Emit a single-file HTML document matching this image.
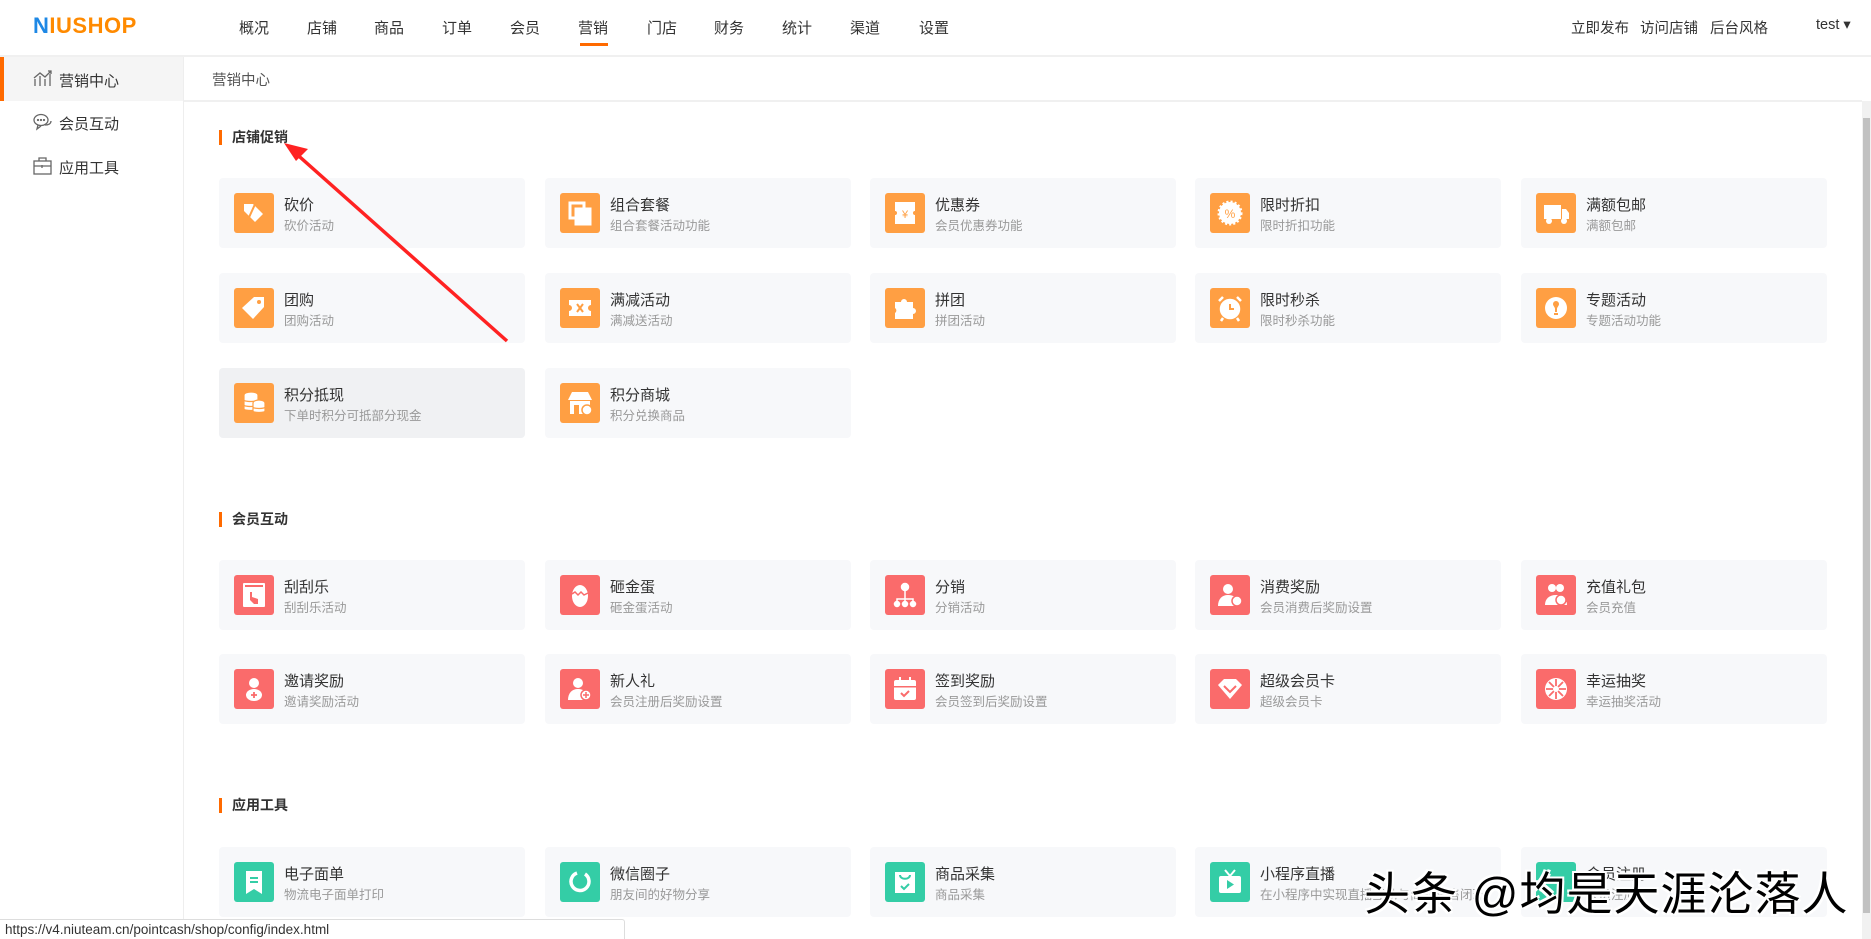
<!DOCTYPE html>
<html><head><meta charset="utf-8"><style>
*{margin:0;padding:0;box-sizing:border-box}
body{width:1871px;height:939px;overflow:hidden;background:#fff;font-family:"Liberation Sans","Noto Sans CJK SC",sans-serif;position:relative;color:#333}
.a{position:absolute;white-space:nowrap}
.hdr{position:absolute;left:0;top:0;width:1871px;height:57px;border-bottom:2px solid #f0f0f0;background:#fff}
.nav{font-size:15px;color:#333;top:17px}
.side{position:absolute;left:0;top:57px;width:184px;height:882px;border-right:1px solid #eee}
.card{position:absolute;width:306px;height:70px;background:#f7f8fa;border-radius:4px}
.card .ic{position:absolute;left:15px;top:15px;width:40px;height:40px;border-radius:3px}
.card .t{position:absolute;left:65px;top:16px;font-size:15px;color:#333;white-space:nowrap}
.card .s{position:absolute;left:65px;top:37px;font-size:12.5px;color:#999;white-space:nowrap}
.o{background:#ff9f43}.r{background:#fa6b6b}.g{background:#34cda6}
.sec{position:absolute;left:219px;font-size:14px;font-weight:bold;color:#333;padding-left:10px;border-left:3px solid #ff6a00;line-height:15px}
svg{display:block}
</style></head><body>
<div class="hdr"></div>
<div class="a" style="left:33px;top:13px;font-size:22px;font-weight:bold;color:#ff8a00;letter-spacing:0.5px"><span style="color:#1e88e5">N</span>IUSHOP</div>
<div class="a nav" style="left:239px">概况</div>
<div class="a nav" style="left:307px">店铺</div>
<div class="a nav" style="left:374px">商品</div>
<div class="a nav" style="left:442px">订单</div>
<div class="a nav" style="left:510px">会员</div>
<div class="a nav" style="left:578px">营销</div>
<div class="a" style="left:580px;top:43px;width:28px;height:3px;background:#ff6a00"></div>
<div class="a nav" style="left:647px">门店</div>
<div class="a nav" style="left:714px">财务</div>
<div class="a nav" style="left:782px">统计</div>
<div class="a nav" style="left:850px">渠道</div>
<div class="a nav" style="left:919px">设置</div>
<div class="a nav" style="left:1571px;font-size:14.5px">立即发布</div>
<div class="a nav" style="left:1640px;font-size:14.5px">访问店铺</div>
<div class="a nav" style="left:1710px;font-size:14.5px">后台风格</div>
<div class="a nav" style="left:1816px;font-size:14.5px">test ▾</div>

<div class="side">
 <div style="position:absolute;left:0;top:0;width:183px;height:44px;background:#f5f5f5;border-left:4px solid #ff6a00"></div>
</div>
<svg class="a" style="left:33px;top:70px" width="20" height="17" viewBox="0 0 20 17" fill="none" stroke="#666" stroke-width="1.3"><path d="M2 16V9M7 16V6M12 16V9M17 16V4M1 8l6-5 5 4 6-6M15 1h3v3"/></svg>
<div class="a" style="left:59px;top:70px;font-size:15px;color:#333">营销中心</div>
<svg class="a" style="left:33px;top:113px" width="19" height="18" viewBox="0 0 19 18" fill="none" stroke="#666" stroke-width="1.3"><ellipse cx="8" cy="7" rx="7" ry="5.5"/><path d="M5 12l-1 4 4-3M12 12c3 0 6-1 6-4"/><circle cx="5" cy="7" r=".5"/><circle cx="8" cy="7" r=".5"/><circle cx="11" cy="7" r=".5"/></svg>
<div class="a" style="left:59px;top:113px;font-size:15px;color:#333">会员互动</div>
<svg class="a" style="left:33px;top:157px" width="19" height="18" viewBox="0 0 19 18" fill="none" stroke="#666" stroke-width="1.3"><rect x="1" y="4" width="17" height="13"/><path d="M6 4V1h7v3M1 9h17M9 8v3"/></svg>
<div class="a" style="left:59px;top:157px;font-size:15px;color:#333">应用工具</div>

<div class="a" style="left:184px;top:57px;width:1678px;height:45px;border-bottom:2px solid #f0f0f0"></div>
<div class="a" style="left:212px;top:69px;font-size:14.5px;color:#555">营销中心</div>
<div class="a" style="left:1862px;top:101px;width:9px;height:838px;background:#f1f1f1"></div>
<div class="a" style="left:1863px;top:118px;width:7px;height:795px;background:#c1c1c1"></div>

<div class="sec" style="top:130px">店铺促销</div>
<div class="sec" style="top:512px">会员互动</div>
<div class="sec" style="top:798px">应用工具</div>

<div class="card" style="left:219px;top:178px"><div class="ic o"><svg width="40" height="40" viewBox="0 0 40 40" fill="#fff"><path d="M10 11h9l10 10-8 8-11-11z"/><path d="M22 9l-10 22" stroke="#ff9f43" stroke-width="2"/></svg></div><div class="t">砍价</div><div class="s">砍价活动</div></div>
<div class="card" style="left:545px;top:178px"><div class="ic o"><svg width="40" height="40" viewBox="0 0 40 40" fill="none" stroke="#fff" stroke-width="3"><rect x="10" y="10" width="14" height="15"/><rect x="16" y="16" width="14" height="15" fill="#fff"/></svg></div><div class="t">组合套餐</div><div class="s">组合套餐活动功能</div></div>
<div class="card" style="left:870px;top:178px"><div class="ic o"><svg width="40" height="40" viewBox="0 0 40 40"><path d="M10 9h20v9a2 2 0 000 4v9H10v-9a2 2 0 000-4z" fill="#fff"/><text x="20" y="25" font-size="11" fill="#ff9f43" text-anchor="middle" font-family="Liberation Sans">¥</text></svg></div><div class="t">优惠券</div><div class="s">会员优惠券功能</div></div>
<div class="card" style="left:1195px;top:178px"><div class="ic o"><svg width="40" height="40" viewBox="0 0 40 40"><circle cx="20" cy="20" r="11" fill="#fff" stroke="#fff" stroke-width="3" stroke-dasharray="2 2"/><text x="20" y="25" font-size="12" fill="#ff9f43" text-anchor="middle" font-family="Liberation Sans">%</text></svg></div><div class="t">限时折扣</div><div class="s">限时折扣功能</div></div>
<div class="card" style="left:1521px;top:178px"><div class="ic o"><svg width="40" height="40" viewBox="0 0 40 40" fill="#fff"><rect x="8" y="12" width="17" height="14"/><path d="M26 16h4l3 4v6h-7z"/><circle cx="13" cy="28" r="3"/><circle cx="28" cy="28" r="3"/></svg></div><div class="t">满额包邮</div><div class="s">满额包邮</div></div>
<div class="card" style="left:219px;top:273px"><div class="ic o"><svg width="40" height="40" viewBox="0 0 40 40" fill="#fff"><path d="M20 9h10v10L19 31 8 20z"/><circle cx="25" cy="14" r="2" fill="#ff9f43"/></svg></div><div class="t">团购</div><div class="s">团购活动</div></div>
<div class="card" style="left:545px;top:273px"><div class="ic o"><svg width="40" height="40" viewBox="0 0 40 40" fill="#fff"><path d="M9 12h22v5a3 3 0 000 6v5H9v-5a3 3 0 000-6z"/><path d="M17 16l6 8M23 16l-6 8" stroke="#ff9f43" stroke-width="2"/></svg></div><div class="t">满减活动</div><div class="s">满减送活动</div></div>
<div class="card" style="left:870px;top:273px"><div class="ic o"><svg width="40" height="40" viewBox="0 0 40 40" fill="#fff"><path d="M10 14h6a3 3 0 016 0h6v6a3 3 0 010 6v5H10v-6a3 3 0 000-5z"/></svg></div><div class="t">拼团</div><div class="s">拼团活动</div></div>
<div class="card" style="left:1195px;top:273px"><div class="ic o"><svg width="40" height="40" viewBox="0 0 40 40" fill="none" stroke="#fff" stroke-width="2.5"><circle cx="20" cy="21" r="9" fill="#fff"/><path d="M20 16v5h4" stroke="#ff9f43" stroke-width="2"/><path d="M9 13l4-4M31 13l-4-4M13 30l-2 3M27 30l2 3"/></svg></div><div class="t">限时秒杀</div><div class="s">限时秒杀功能</div></div>
<div class="card" style="left:1521px;top:273px"><div class="ic o"><svg width="40" height="40" viewBox="0 0 40 40"><circle cx="20" cy="20" r="11" fill="#fff"/><path d="M17 16a3 3 0 116 0c0 2-2 3-2 5v3h-2v-3c0-2-2-3-2-5z" fill="#ff9f43"/><rect x="18" y="25" width="4" height="2" fill="#ff9f43"/></svg></div><div class="t">专题活动</div><div class="s">专题活动功能</div></div>
<div class="card" style="left:219px;top:368px;background:#f0f1f3"><div class="ic o"><svg width="40" height="40" viewBox="0 0 40 40" fill="#fff" stroke="#ff9f43" stroke-width="1.2"><ellipse cx="17" cy="12" rx="7" ry="3"/><path d="M10 12v14c0 2 14 2 14 0V12"/><path d="M10 17c0 2 14 2 14 0M10 22c0 2 14 2 14 0"/><ellipse cx="25" cy="20" rx="6" ry="3"/><path d="M19 20v8c0 2 12 2 12 0v-8M19 24c0 2 12 2 12 0"/></svg></div><div class="t">积分抵现</div><div class="s">下单时积分可抵部分现金</div></div>
<div class="card" style="left:545px;top:368px"><div class="ic o"><svg width="40" height="40" viewBox="0 0 40 40" fill="#fff"><path d="M12 9h16l4 8H8z"/><path d="M10 18h20v13H10z"/><rect x="14" y="22" width="5" height="9" fill="#ff9f43"/><circle cx="27" cy="27" r="5" fill="#fff" stroke="#ff9f43" stroke-width="1.5"/></svg></div><div class="t">积分商城</div><div class="s">积分兑换商品</div></div>

<div class="card" style="left:219px;top:560px"><div class="ic r"><svg width="40" height="40" viewBox="0 0 40 40" fill="#fff"><rect x="9" y="8" width="22" height="24" rx="1"/><rect x="11" y="10" width="18" height="2" fill="#fa6b6b"/><path d="M16 17v8l4 4h4v-5l-6-2v-5z" fill="#fa6b6b"/></svg></div><div class="t">刮刮乐</div><div class="s">刮刮乐活动</div></div>
<div class="card" style="left:545px;top:560px"><div class="ic r"><svg width="40" height="40" viewBox="0 0 40 40" fill="#fff"><ellipse cx="20" cy="21" rx="8" ry="11"/><path d="M12 19l3-2 3 3 3-3 3 3 4-2" stroke="#fa6b6b" stroke-width="1.5" fill="none"/></svg></div><div class="t">砸金蛋</div><div class="s">砸金蛋活动</div></div>
<div class="card" style="left:870px;top:560px"><div class="ic r"><svg width="40" height="40" viewBox="0 0 40 40" fill="#fff" stroke="#fff" stroke-width="1.5"><circle cx="20" cy="12" r="3.5"/><path d="M20 15v9M12 28v-4h16v4M20 24v4" fill="none"/><circle cx="12" cy="29" r="2.5"/><circle cx="20" cy="29" r="2.5"/><circle cx="28" cy="29" r="2.5"/></svg></div><div class="t">分销</div><div class="s">分销活动</div></div>
<div class="card" style="left:1195px;top:560px"><div class="ic r"><svg width="40" height="40" viewBox="0 0 40 40" fill="#fff"><circle cx="18" cy="14" r="5"/><path d="M8 31c0-7 4-11 10-11s8 3 8 3v8z"/><circle cx="27" cy="26" r="5" stroke="#fa6b6b" stroke-width="1.5"/></svg></div><div class="t">消费奖励</div><div class="s">会员消费后奖励设置</div></div>
<div class="card" style="left:1521px;top:560px"><div class="ic r"><svg width="40" height="40" viewBox="0 0 40 40" fill="#fff"><circle cx="16" cy="13" r="4"/><circle cx="24" cy="13" r="4"/><path d="M9 30c0-6 4-10 11-10s11 4 11 10z"/><circle cx="25" cy="25" r="5" stroke="#fa6b6b" stroke-width="1.5"/></svg></div><div class="t">充值礼包</div><div class="s">会员充值</div></div>

<div class="card" style="left:219px;top:654px"><div class="ic r"><svg width="40" height="40" viewBox="0 0 40 40" fill="#fff"><circle cx="20" cy="14" r="5"/><ellipse cx="20" cy="26" rx="8" ry="6"/><path d="M20 23v6M17 26h6" stroke="#fa6b6b" stroke-width="1.8"/></svg></div><div class="t">邀请奖励</div><div class="s">邀请奖励活动</div></div>
<div class="card" style="left:545px;top:654px"><div class="ic r"><svg width="40" height="40" viewBox="0 0 40 40" fill="#fff"><circle cx="18" cy="14" r="5"/><path d="M8 31c0-7 4-11 10-11s9 4 9 4v7z"/><circle cx="26" cy="26" r="5" stroke="#fa6b6b" stroke-width="1.5"/><path d="M26 23v6M23 26h6" stroke="#fa6b6b" stroke-width="1.5"/></svg></div><div class="t">新人礼</div><div class="s">会员注册后奖励设置</div></div>
<div class="card" style="left:870px;top:654px"><div class="ic r"><svg width="40" height="40" viewBox="0 0 40 40" fill="#fff"><rect x="9" y="11" width="22" height="20" rx="2"/><rect x="9" y="17" width="22" height="1.5" fill="#fa6b6b"/><path d="M15 8v5M25 8v5" stroke="#fff" stroke-width="2"/><path d="M16 24l3 3 5-5" stroke="#fa6b6b" stroke-width="2" fill="none"/></svg></div><div class="t">签到奖励</div><div class="s">会员签到后奖励设置</div></div>
<div class="card" style="left:1195px;top:654px"><div class="ic r"><svg width="40" height="40" viewBox="0 0 40 40" fill="#fff"><path d="M8 16l6-6h12l6 6-12 14z"/><path d="M14 17l6 6 6-6" stroke="#fa6b6b" stroke-width="2" fill="none"/></svg></div><div class="t">超级会员卡</div><div class="s">超级会员卡</div></div>
<div class="card" style="left:1521px;top:654px"><div class="ic r"><svg width="40" height="40" viewBox="0 0 40 40" fill="#fff"><circle cx="20" cy="20" r="11"/><path d="M20 10v20M10 20h20M13 13l14 14M27 13L13 27" stroke="#fa6b6b" stroke-width="1.8"/><circle cx="20" cy="20" r="3"/></svg></div><div class="t">幸运抽奖</div><div class="s">幸运抽奖活动</div></div>

<div class="card" style="left:219px;top:847px"><div class="ic g"><svg width="40" height="40" viewBox="0 0 40 40" fill="#fff"><path d="M12 9h16v23l-8-5-8 5z"/><path d="M16 16h8M16 20h8" stroke="#34cda6" stroke-width="2"/></svg></div><div class="t">电子面单</div><div class="s">物流电子面单打印</div></div>
<div class="card" style="left:545px;top:847px"><div class="ic g"><svg width="40" height="40" viewBox="0 0 40 40" fill="none" stroke="#fff" stroke-width="3.5"><path d="M25 12a9 9 0 11-8-1"/></svg></div><div class="t">微信圈子</div><div class="s">朋友间的好物分享</div></div>
<div class="card" style="left:870px;top:847px"><div class="ic g"><svg width="40" height="40" viewBox="0 0 40 40"><rect x="10" y="10" width="20" height="21" fill="#fff"/><path d="M15 13c0 5 10 5 10 0M16 24l3 3 5-5" stroke="#34cda6" stroke-width="2" fill="none"/></svg></div><div class="t">商品采集</div><div class="s">商品采集</div></div>
<div class="card" style="left:1195px;top:847px"><div class="ic g"><svg width="40" height="40" viewBox="0 0 40 40" fill="#fff"><rect x="9" y="14" width="22" height="17" rx="2"/><path d="M15 8l5 6 5-6" stroke="#fff" stroke-width="2" fill="none"/><path d="M17 18v9l7-4.5z" fill="#34cda6"/></svg></div><div class="t">小程序直播</div><div class="s">在小程序中实现直播互动与商品销售闭环</div></div>
<div class="card" style="left:1521px;top:847px"><div class="ic g"></div><div class="t">会员注册</div><div class="s">会员注册</div></div>

<svg class="a" style="left:0;top:0" width="1871" height="939"><path d="M507 341L292 150" stroke="#f22" stroke-width="3.5"/><path d="M284 143l24 6-12 12z" fill="#f22"/></svg>

<div class="a" style="left:1364px;top:858px;font-size:46px;color:#000;letter-spacing:1px;text-shadow:2px 2px 0 #fff,-2px -2px 0 #fff,2px -2px 0 #fff,-2px 2px 0 #fff;font-family:'Liberation Sans','Noto Sans CJK SC',sans-serif">头条 @均是天涯沦落人</div>

<div class="a" style="left:0;top:919px;width:625px;height:20px;background:#fff;border:1px solid #ddd;border-left:none;border-bottom:none;border-radius:0 3px 0 0;font-size:13.5px;color:#333;padding:2px 5px">https://v4.niuteam.cn/pointcash/shop/config/index.html</div>
</body></html>
